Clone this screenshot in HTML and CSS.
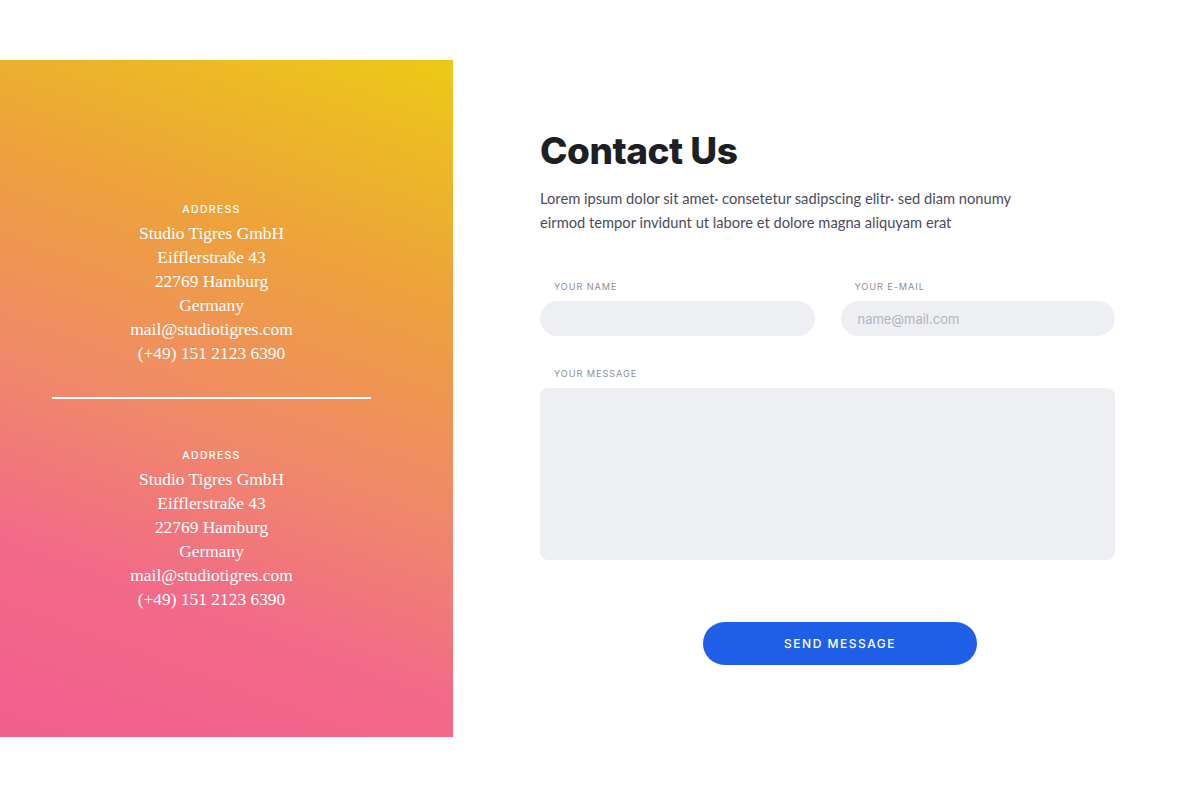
FILE: index.html
```html
<!DOCTYPE html>
<html lang="en">
<head>
<meta charset="utf-8">
<title>Contact Us</title>
<link rel="stylesheet" href="styles.css">
</head>
<body>
<main class="page">
  <aside class="panel">
    <div class="panel-inner">
      <section class="address">
        <div class="address-label">ADDRESS</div>
        <p class="address-lines">Studio Tigres GmbH<br>Eifflerstraße 43<br>22769 Hamburg<br>Germany<br>mail@studiotigres.com<br>(+49) 151 2123 6390</p>
      </section>
      <hr class="divider">
      <section class="address">
        <div class="address-label">ADDRESS</div>
        <p class="address-lines">Studio Tigres GmbH<br>Eifflerstraße 43<br>22769 Hamburg<br>Germany<br>mail@studiotigres.com<br>(+49) 151 2123 6390</p>
      </section>
    </div>
  </aside>
  <section class="content">
    <h1 class="title">Contact Us</h1>
    <p class="intro">Lorem ipsum dolor sit amet· consetetur sadipscing elitr· sed diam nonumy eirmod tempor invidunt ut labore et dolore magna aliquyam erat</p>
    <form class="form">
      <div class="row">
        <label class="field">
          <span class="label">YOUR NAME</span>
          <input class="input" type="text">
        </label>
        <label class="field">
          <span class="label">YOUR E-MAIL</span>
          <input class="input" type="email" placeholder="name@mail.com">
        </label>
      </div>
      <label class="field">
        <span class="label">YOUR MESSAGE</span>
        <textarea class="textarea"></textarea>
      </label>
      <button class="send" type="button">SEND MESSAGE</button>
    </form>
  </section>
</main>
</body>
</html>
```
FILE: styles.css
```css
html, body {
  margin: 0;
  padding: 0;
  background: #ffffff;
}
body {
  font-family: "Lato", "Open Sans", sans-serif;
}
.page {
  display: flex;
  margin-top: 60px;
  height: 677px;
}
.panel {
  width: 453px;
  flex: none;
  background: linear-gradient(200deg, #ecca16 0%, #eda33a 28%, #f0886a 55%, #f26a88 76%, #f25e8f 100%);
}
.panel-inner {
  width: 319px;
  margin-left: 52px;
  padding-top: 142px;
  display: flex;
  flex-direction: column;
  align-items: center;
  text-align: center;
  color: #ffffff;
}
.address {
  display: flex;
  flex-direction: column;
  align-items: center;
}
.address-label {
  font-family: "Inter", "Open Sans", sans-serif;
  font-size: 10.5px;
  font-weight: 500;
  letter-spacing: 1.3px;
  line-height: 16px;
}
.address-lines {
  margin: 3px 0 0;
  font-family: "Liberation Serif", "DejaVu Serif", serif;
  font-size: 17.4px;
  line-height: 24px;
}
.divider {
  width: 319px;
  height: 2px;
  margin: 32px 0 49px;
  border: 0;
  background: #ffffff;
}
.content {
  padding-left: 87px;
  width: 575px;
}
.title {
  margin: 67px 0 0;
  font-family: "Inter", sans-serif;
  font-weight: 800;
  font-size: 37px;
  line-height: 48px;
  letter-spacing: -0.5px;
  color: #1e1f24;
}
.intro {
  margin: 11px 0 0;
  width: 490px;
  font-size: 14.7px;
  line-height: 24px;
  color: #4b4c5c;
}
.form {
  display: flex;
  flex-direction: column;
  margin-top: 46px;
}
.row {
  display: flex;
  gap: 26px;
}
.field {
  display: flex;
  flex-direction: column;
  flex: 1;
}
.label {
  font-family: "Inter", sans-serif;
  font-size: 9.2px;
  letter-spacing: 0.9px;
  line-height: 14px;
  color: #8d8e9c;
  padding-left: 14px;
  margin-bottom: 7px;
}
.input {
  height: 35px;
  border: 0;
  border-radius: 18px;
  background: #eeeff2;
  padding: 0 17px;
  font-family: "Inter", sans-serif;
  font-size: 13px;
  color: #4b4c5c;
  outline: none;
  box-sizing: border-box;
  width: 100%;
}
.input::placeholder {
  color: #b3b4be;
}
.row + .field {
  margin-top: 31px;
}
.textarea {
  height: 172px;
  border: 0;
  border-radius: 8px;
  background: #eeeff2;
  resize: none;
  box-sizing: border-box;
  width: 100%;
  outline: none;
}
.send {
  align-self: flex-start;
  margin: 62px 0 0 163px;
  width: 274px;
  height: 43px;
  border: 0;
  border-radius: 22px;
  background: #1f5fe8;
  color: #ffffff;
  font-family: "Inter", sans-serif;
  font-size: 12px;
  font-weight: 500;
  letter-spacing: 1.5px;
  cursor: pointer;
}
```
